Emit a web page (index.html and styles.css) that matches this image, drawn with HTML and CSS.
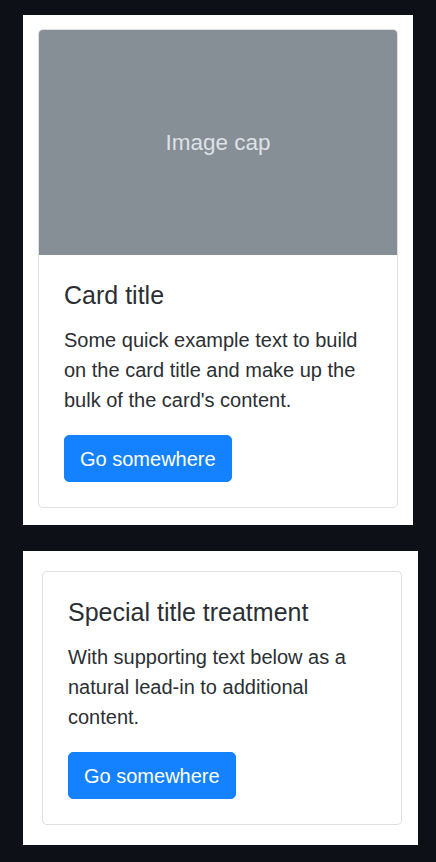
FILE: index.html
```html
<!DOCTYPE html>
<html lang="en">
<head>
<meta charset="utf-8">
<title>Cards</title>
<link rel="stylesheet" href="styles.css">
</head>
<body>
<div class="page">
  <section class="panel panel-one">
    <div class="card">
      <div class="img-cap"><span>Image cap</span></div>
      <div class="card-body">
        <h5 class="card-title">Card title</h5>
        <p class="card-text">Some quick example text to build on the card title and make up the bulk of the card's content.</p>
        <a class="btn" href="#">Go somewhere</a>
      </div>
    </div>
  </section>
  <section class="panel panel-two">
    <div class="card">
      <div class="card-body">
        <h5 class="card-title">Special title treatment</h5>
        <p class="card-text">With supporting text below as a natural lead-in to additional content.</p>
        <a class="btn" href="#">Go somewhere</a>
      </div>
    </div>
  </section>
</div>
</body>
</html>
```
FILE: styles.css
```css
* { box-sizing: border-box; }
html, body { margin: 0; padding: 0; }
body {
  background: #0d1117;
  font-family: "Liberation Sans", Arial, sans-serif;
  color: #2b2f33;
  font-size: 20px;
  line-height: 1.5;
}
.page {
  padding: 15px 0 0 23px;
  display: flex;
  flex-direction: column;
  gap: 26px;
}
.panel {
  background: #fff;
}
.panel-one {
  width: 390px;
  padding: 14px 15px 17px 15px;
}
.panel-two {
  width: 395px;
  padding: 20px 16px 20px 19px;
}
.card {
  width: 360px;
  border: 1px solid rgba(0,0,0,0.125);
  border-radius: 5px;
  overflow: hidden;
  background: #fff;
}
.img-cap {
  height: 225px;
  background: #868e96;
  display: flex;
  align-items: center;
  justify-content: center;
  color: #dee2e6;
  font-size: 22.5px;
}
.card-body {
  padding: 25px;
}
.card-title {
  margin: 0 0 15px;
  font-size: 25px;
  font-weight: 400;
  line-height: 1.2;
}
.card-text {
  margin: 0 0 20px;
}
.btn {
  display: inline-block;
  background: #1482ff;
  border: 1px solid #1482ff;
  color: #fff;
  text-decoration: none;
  padding: 7.5px 15px;
  border-radius: 5px;
  font-size: 20px;
  line-height: 1.5;
}
```
